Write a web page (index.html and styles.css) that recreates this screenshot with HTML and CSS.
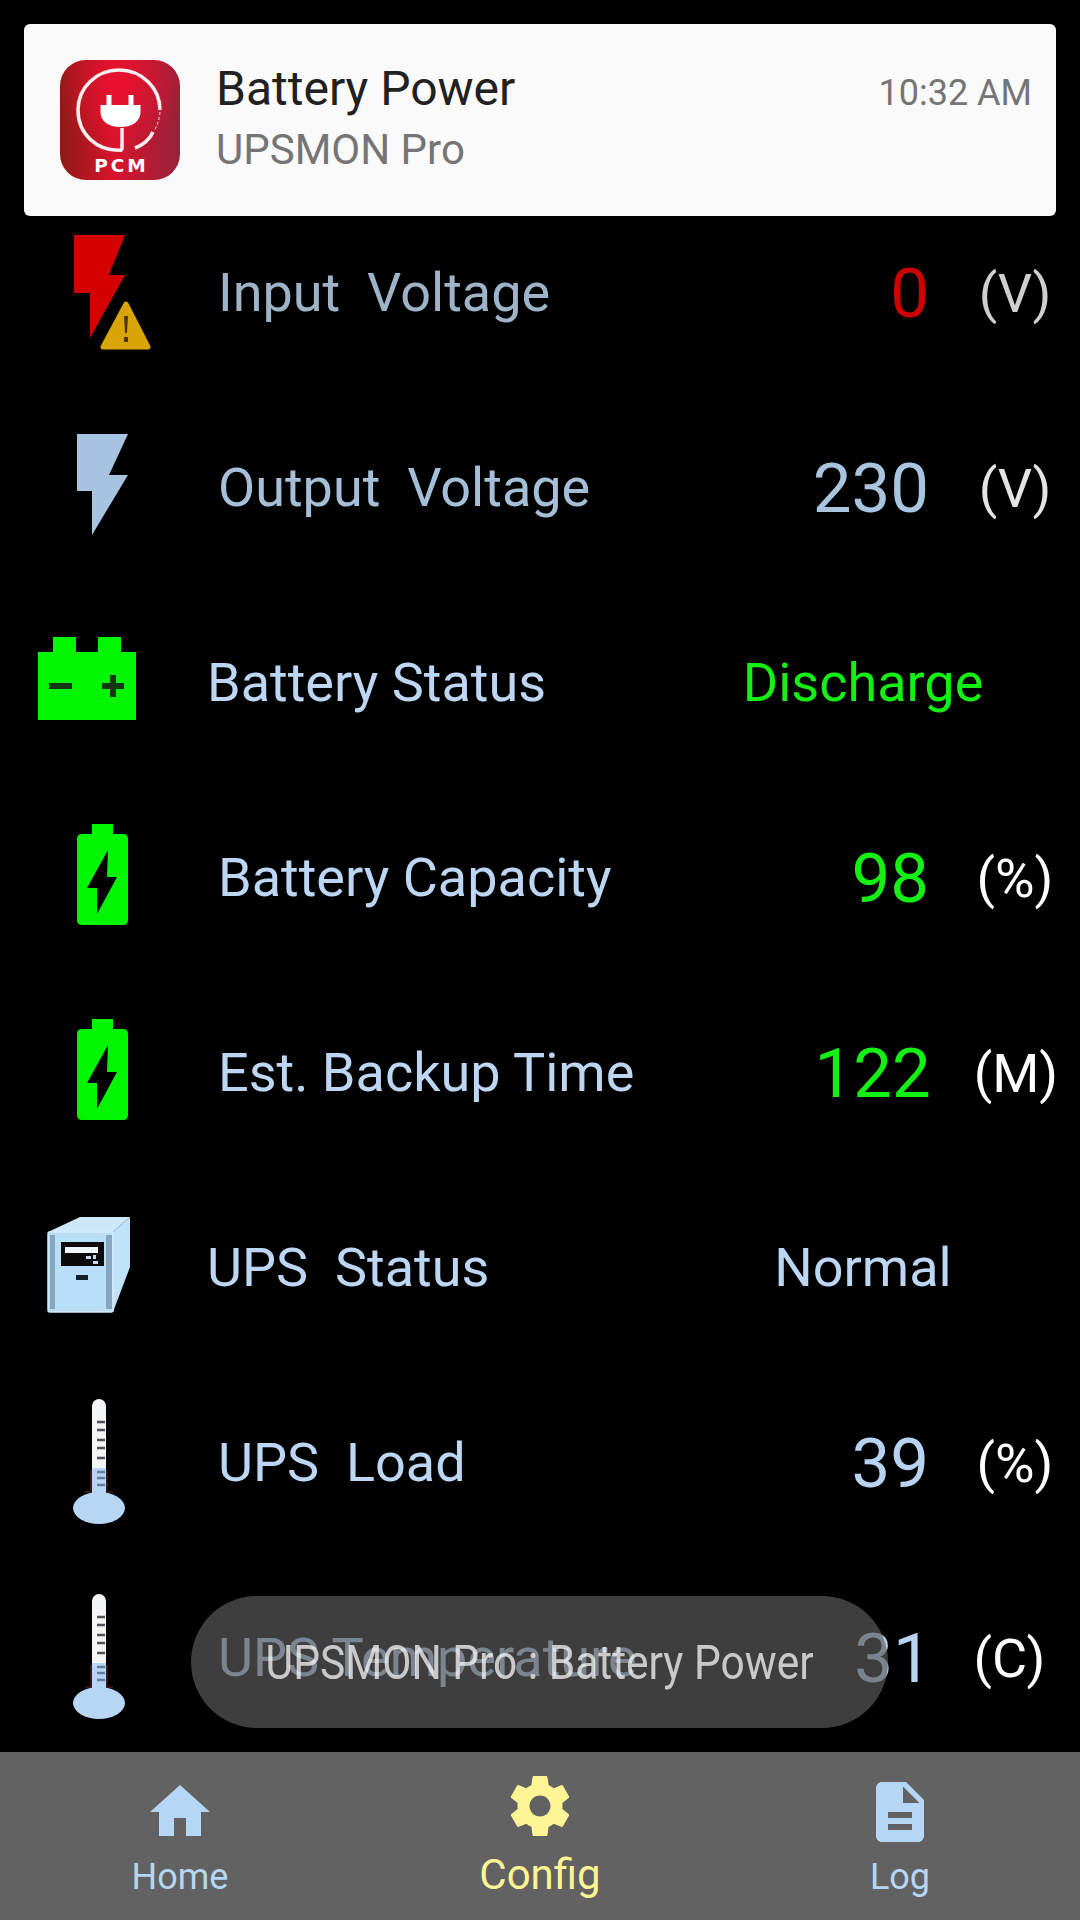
FILE: index.html
```html
<!DOCTYPE html>
<html lang="en">
<head>
<meta charset="utf-8">
<title>UPSMON Pro</title>
<link rel="stylesheet" href="styles.css">
</head>
<body>
<div class="screen">
  <main class="list">
    <div class="row">
      <svg class="icon" viewBox="0 196 219 195"><polygon fill="#d40000" points="74,235 125,235 109,275 125,275 90,338 90,293 74,293"/><path class="soft" fill="#d9a406" stroke="#d9a406" stroke-width="5" stroke-linejoin="round" d="M126 304 L148 347 H103Z"/><path class="soft" fill="#4a3700" d="M124 316h4l-1 17h-2zM124 337h4v5h-4z"/></svg>
      <span class="label dim1">Input&nbsp; Voltage</span>
      <span class="value red">0</span>
      <span class="unit unit1">(V)</span>
    </div>
    <div class="row">
      <svg class="icon" viewBox="0 391 219 195"><polygon fill="#a6c3e0" points="77,434 128,434 109,475 128,475 92,535 92,491 77,491"/></svg>
      <span class="label dim2">Output&nbsp; Voltage</span>
      <span class="value blue2">230</span>
      <span class="unit unit2">(V)</span>
    </div>
    <div class="row status-row">
      <svg class="icon" viewBox="0 586 208 195"><path fill="#00f500" d="M38 652h98v68H38zM53 637h23v15H53zM98 637h23v15H98z"/><path class="soft" fill="#123612" d="M49 683h23v6H49zM102 683h22v6h-22zM110 675h6v22h-6z"/></svg>
      <span class="label">Battery Status</span>
      <span class="status green">Discharge</span>
    </div>
    <div class="row">
      <svg class="icon" viewBox="0 781 219 195"><path fill="#00f500" fill-rule="evenodd" d="M92 824h21v10h10q5 0 5 5v81q0 5-5 5H82q-5 0-5-5V839q0-5 5-5h10zM108 850 87 888H97V914L117 877H107z"/></svg>
      <span class="label">Battery Capacity</span>
      <span class="value green">98</span>
      <span class="unit">(%)</span>
    </div>
    <div class="row">
      <svg class="icon" viewBox="0 976 219 195"><path fill="#00f500" fill-rule="evenodd" d="M92 1019h21v10h10q5 0 5 5v81q0 5-5 5H82q-5 0-5-5V1034q0-5 5-5h10zM108 1045 87 1083H97V1109L117 1072H107z"/></svg>
      <span class="label">Est. Backup Time</span>
      <span class="value green">122</span>
      <span class="unit">(M)</span>
    </div>
    <div class="row status-row">
      <svg class="icon" viewBox="0 1171 208 195"><g class="soft"><path fill="#cde8fb" d="M48 1232 80 1217H130L113 1232Z"/><path fill="#bfe3fa" d="M113 1232 130 1217V1267L113 1312Z"/><rect fill="#b8def8" stroke="#d4ecfb" stroke-width="1.5" x="48" y="1232" width="65" height="80" rx="2"/><path fill="#86a6be" d="M50 1235h5v74h-5zM106 1235h6v74h-6z"/><rect fill="#0a0a0a" x="61" y="1242" width="43" height="24"/><rect fill="#eef6fb" x="65" y="1247" width="33" height="6"/><path fill="#c8dce8" d="M86 1256h5v3h-5zM93 1255h3v4h-3zM93 1261h5v3h-5z"/><rect fill="#15212a" x="76" y="1275" width="12" height="5"/></g></svg>
      <span class="label">UPS&nbsp; Status</span>
      <span class="status blue">Normal</span>
    </div>
    <div class="row">
      <svg class="icon" viewBox="0 1366 219 195"><g class="soft"><rect fill="#f2f4f6" x="92" y="1399" width="14" height="98" rx="7"/><rect fill="#b6d6f3" x="92" y="1468" width="14" height="30"/><path stroke="#4c5258" stroke-width="2.5" d="M97 1422h8M97 1430h8M97 1440h8M97 1448h8M97 1458h8"/><path stroke="#5f7f9f" stroke-width="2.5" d="M97 1472h8M97 1478h8M97 1485h8"/><path stroke="#8a3040" stroke-width="1.5" fill="none" d="M91 1492h-6M107 1492h6M91 1470v22M107 1470v22" opacity=".5"/><ellipse fill="#b6d6f3" cx="99" cy="1508" rx="26" ry="16"/></g></svg>
      <span class="label">UPS&nbsp; Load</span>
      <span class="value">39</span>
      <span class="unit">(%)</span>
    </div>
    <div class="row">
      <svg class="icon" viewBox="0 1561 219 195"><g class="soft"><rect fill="#f2f4f6" x="92" y="1594" width="14" height="98" rx="7"/><rect fill="#b6d6f3" x="92" y="1663" width="14" height="30"/><path stroke="#4c5258" stroke-width="2.5" d="M97 1617h8M97 1625h8M97 1635h8M97 1643h8M97 1653h8"/><path stroke="#5f7f9f" stroke-width="2.5" d="M97 1667h8M97 1673h8M97 1680h8"/><path stroke="#8a3040" stroke-width="1.5" fill="none" d="M91 1687h-6M107 1687h6M91 1665v22M107 1665v22" opacity=".5"/><ellipse fill="#b6d6f3" cx="99" cy="1703" rx="26" ry="16"/></g></svg>
      <span class="label">UPS Temperature</span>
      <span class="value">31</span>
      <span class="unit unit3">(C)</span>
    </div>
  </main>

  <nav class="nav">
    <div class="tab">
      <svg class="tab-icon" viewBox="0 0 24 24"><path d="M10 20v-6h4v6h5v-8h3L12 3 2 12h3v8z"/></svg>
      <span class="tab-label">Home</span>
    </div>
    <div class="tab active">
      <svg class="tab-icon" viewBox="0 0 24 24"><path d="M19.43 12.98c.04-.32.07-.64.07-.98s-.03-.66-.07-.98l2.11-1.65c.19-.15.24-.42.12-.64l-2-3.46c-.12-.22-.39-.3-.61-.22l-2.49 1c-.52-.4-1.08-.73-1.69-.98l-.38-2.65C14.46 2.18 14.25 2 14 2h-4c-.25 0-.46.18-.49.42l-.38 2.65c-.61.25-1.17.59-1.69.98l-2.49-1c-.23-.09-.49 0-.61.22l-2 3.46c-.13.22-.07.49.12.64l2.11 1.65c-.04.32-.07.65-.07.98s.03.66.07.98l-2.11 1.65c-.19.15-.24.42-.12.64l2 3.46c.12.22.39.3.61.22l2.49-1c.52.4 1.08.73 1.69.98l.38 2.65c.03.24.24.42.49.42h4c.25 0 .46-.18.49-.42l.38-2.65c.61-.25 1.17-.59 1.69-.98l2.49 1c.23.09.49 0 .61-.22l2-3.46c.12-.22.07-.49-.12-.64l-2.11-1.65zM12 15.5c-1.93 0-3.5-1.57-3.5-3.5s1.57-3.5 3.5-3.5 3.5 1.57 3.5 3.5-1.57 3.5-3.5 3.5z"/></svg>
      <span class="tab-label">Config</span>
    </div>
    <div class="tab">
      <svg class="tab-icon" viewBox="0 0 24 24"><path d="M14 2H6c-1.1 0-1.99.9-1.99 2L4 20c0 1.1.89 2 1.99 2H18c1.1 0 2-.9 2-2V8l-6-6zm2 16H8v-2h8v2zm0-4H8v-2h8v2zm-3-5V3.5L18.5 9H13z"/></svg>
      <span class="tab-label">Log</span>
    </div>
  </nav>

  <div class="notification">
    <svg class="app-logo" viewBox="0 0 120 120">
      <defs>
        <linearGradient id="logoBase" x1="0" x2="1" y1="0" y2="0"><stop offset="0" stop-color="#8e1a16"/><stop offset=".45" stop-color="#d8142c"/><stop offset="1" stop-color="#96223a"/></linearGradient>
        <radialGradient id="logoGlow" cx=".5" cy=".2" r=".55"><stop offset="0" stop-color="#f01030" stop-opacity=".8"/><stop offset="1" stop-color="#f01030" stop-opacity="0"/></radialGradient>
      </defs>
      <rect width="120" height="120" rx="26" fill="url(#logoBase)"/>
      <rect width="120" height="120" rx="26" fill="url(#logoGlow)"/>
      <g fill="none" stroke="#fbeeee" class="soft-logo">
        <path stroke-width="3.5" d="M62 90C36 92 18 73 18 50C18 28 36 10 59 10C82 10 100 28 100 50"/>
        <path stroke-width="3.5" d="M62 68V88Q62 90 60 90"/>
        <path stroke-width="3.5" d="M75 88Q88 83 93 72"/>
        <path stroke-width="1" stroke-dasharray="3 2" d="M100 52Q99 63 94 71"/>
      </g>
      <path fill="#fff" d="M46.500 35h5v10h17V35h5v10h7v7c0 9-8 15-20 15s-20-6-20-15v-7h6z"/>
      <text class="logo-text" x="61.500" y="112" text-anchor="middle">PCM</text>
    </svg>
    <div class="notif-text">
      <div class="notif-title">Battery Power</div>
      <div class="notif-app">UPSMON Pro</div>
    </div>
    <div class="notif-time">10:32 AM</div>
  </div>

  <div class="toast"><span class="toast-text">UPSMON Pro : Battery Power</span></div>
</div>
</body>
</html>
```
FILE: styles.css
```css
* { box-sizing: border-box; }
html, body { margin: 0; padding: 0; background: #000; }
.screen {
  position: relative;
  width: 1080px;
  height: 1920px;
  display: flex;
  flex-direction: column;
  overflow: hidden;
  background: #000;
  font-family: Roboto, "Liberation Sans", sans-serif;
}
.list { flex: 1; min-height: 0; padding-top: 196px; overflow: hidden; }
.row { display: flex; align-items: center; height: 195px; color: #bcd6f4; }
.icon { flex: none; width: 219px; height: 195px; }
.status-row .icon { width: 208px; }
.soft { filter: blur(0.6px); }
.soft-logo { filter: blur(0.3px); }
.label { flex: 1; margin: -2px 0 0 -1px; font-size: 54px; color: #bcd6f4; white-space: nowrap; }
.dim1 { color: #9fb3c8; }
.dim2 { color: #a6bfd9; }
.value { width: 301px; text-align: right; font-size: 69px; color: #b8d3f1; }
.unit { width: 151px; text-align: center; padding-left: 21px; font-size: 54px; color: #fff; }
.unit1 { color: #cfcfcf; }
.unit2 { color: #e4e4e4; }
.unit3 { padding-left: 7px; }
.status { width: 360px; margin-right: 37px; text-align: center; font-size: 54px; margin-top: -2px; }
.red { color: #cf0000; }
.green { color: #14f014; }
.blue { color: #bcd6f4; }
.blue2 { color: #a9c4df; }

.nav { flex: none; height: 168px; background: #626262; display: flex; position: relative; }
.tab { flex: 1; display: flex; flex-direction: column; align-items: center; color: #b6d6f5; }
.tab-icon { width: 72px; height: 72px; fill: currentColor; margin-top: 24px; }
.tab-label { font-size: 36px; line-height: 42px; margin-top: 8px; }
.active { color: #fff594; }
.active .tab-icon { margin-top: 18px; }
.active .tab-label { font-size: 42px; line-height: 48px; margin-top: 9px; }

.notification {
  position: absolute;
  left: 24px;
  top: 24px;
  width: 1032px;
  height: 192px;
  display: flex;
  align-items: center;
  padding: 0 24px 0 36px;
  background: #fafafa;
  border-radius: 6px;
}
.app-logo { flex: none; width: 120px; height: 120px; }
.logo-text { font-family: "DejaVu Sans", sans-serif; font-weight: 700; font-size: 18.5px; letter-spacing: 3px; fill: #fff; }
.notif-text { flex: 1; margin-left: 36px; }
.notif-title { font-size: 48px; line-height: 60px; color: #212121; margin-top: -1px; }
.notif-app { font-size: 42px; line-height: 60px; color: #757575; margin-top: 1px; }
.notif-time { align-self: flex-start; margin-top: 49px; font-size: 36px; line-height: 40px; color: #757575; }

.toast {
  position: absolute;
  left: 191px;
  top: 1596px;
  width: 697px;
  height: 132px;
  border-radius: 66px;
  display: flex;
  align-items: center;
  justify-content: center;
  background: rgba(93, 93, 93, 0.67);
  color: rgba(255, 255, 255, 0.72);
  font-size: 48px;
  white-space: nowrap;
}
.toast-text { display: inline-block; flex: none; transform: scaleX(0.885); }
```
